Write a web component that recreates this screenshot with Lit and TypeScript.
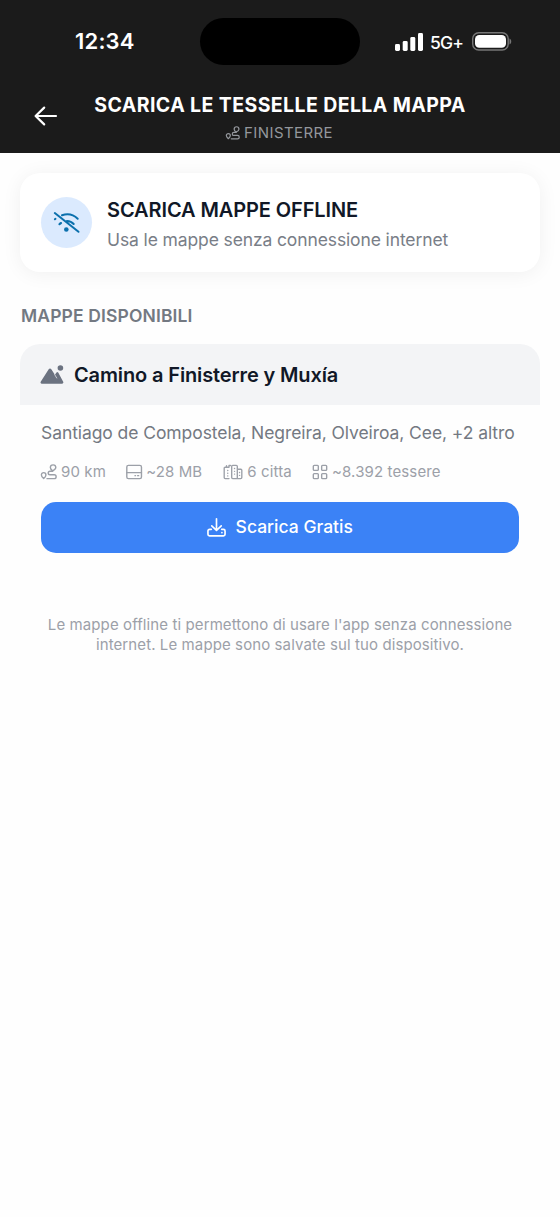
import { LitElement, html, css, svg } from "lit";
import { customElement, property } from "lit/decorators.js";

const glyphs: Record<string, unknown> = {
  back: svg`<path d="M3 12h20M11.200 3.600 2.600 12l8.600 8.400" stroke-width="2.200"/>`,
  route: svg`<path d="M4 21.800C2.200 20.200.6 18.500.6 16.400a3.400 3.400 0 0 1 6.800 0c0 2.100-1.600 3.800-3.400 5.400z"/><path d="M17.500 10.400c-2.200-1.500-3.500-3.200-3.500-5a4.100 4.100 0 0 1 8.200 0c0 2.200-2 3.700-4.700 5z"/><path d="M17.500 10.800h-4a2.700 2.700 0 0 0 0 5.400h6.300a2.900 2.900 0 0 1 0 5.800H9"/>`,
  drive: svg`<rect x="1.200" y="2" width="22" height="20" rx="2.500"/><path d="M1.200 13h22M13.500 17.500h.8M17.500 17.500h1.500"/>`,
  city: svg`<g stroke-width="1.350"><path d="M6 14.600H2.200a1 1 0 0 1-1-1V4.200a1 1 0 0 1 1-1H6M3.500 3V1.700M6 3V1.500h1.500M9.700 1.300h3.600a1 1 0 0 1 1 1v12.300H9.700a1 1 0 0 1-1-1V2.300a1 1 0 0 1 1-1zM14.500 5.200h3.300a1 1 0 0 1 1 1v7.400a1 1 0 0 1-1 1h-3.500"/><path d="M4.700 6.500h.1M4.700 9.200h.1M4.700 11.900h.1M11.500 4.500h.1M11.500 7.300h.1M11.500 10.100h.1M16.500 8.500h.1M16.500 11.400h.1"/></g>`,
  grid: svg`<rect x="2" y="2" width="7.500" height="7.500" rx="1.300"/><rect x="14.500" y="2" width="7.500" height="7.500" rx="1.300"/><rect x="2" y="14.500" width="7.500" height="7.500" rx="1.300"/><rect x="14.500" y="14.500" width="7.500" height="7.500" rx="1.300"/>`,
  download: svg`<path d="M12 1v14.500M6 10l6 5.700 6-5.700M5.500 14.300H3.200a2 2 0 0 0-2 2v4.200a2 2 0 0 0 2 2h17.600a2 2 0 0 0 2-2v-4.200a2 2 0 0 0-2-2h-2.300M18.800 18.500h.1"/>`,
  wifiOff: svg`<path d="M.8 2 24.500 20.800M8 4.300C13.500 2.400 19.500 3.700 23.700 7.800M.9 8.300l.6-.5M5.400 13.300c.6-.6 1.100-1 1.700-1.300M13 10.100c2.700.1 5 1 6.700 2.900"/><circle cx="12.300" cy="18.500" r="2.300" fill="currentColor" stroke="none"/>`,
  mountain: svg`<g fill="currentColor" stroke="none"><path d="M.7 18.800 8.700 6.200c.7-1.100 1.900-1.100 2.600 0l3.600 5.600 1.600-2.300c.5-.7 1.200-.7 1.700 0l5 9.300c.5 1-.1 1.900-1.200 1.900H1.800c-1.100 0-1.600-.9-1.100-1.900z"/><circle cx="20.400" cy="5" r="2.800"/></g><path d="m14.700 11.600 2 3.400" stroke="#f3f4f6" stroke-width=".7"/>`,
};

@customElement("line-icon")
class LineIcon extends LitElement {
  @property() name = "";
  @property() box = "0 0 24 24";
  static styles = css`
    :host { display: block; flex: none; }
    svg { display: block; width: 100%; height: 100%; fill: none; stroke: currentColor;
      stroke-width: var(--line, 2.1); stroke-linecap: round; stroke-linejoin: round; overflow: visible; }
  `;
  render() {
    return html`<svg viewBox=${this.box} aria-hidden="true">${glyphs[this.name]}</svg>`;
  }
}

@customElement("app-root")
class AppRoot extends LitElement {
  static styles = css`
    :host { display: block; min-height: 1217px; background: #fefefe; color: #111827;
      font-family: Inter, "Liberation Sans", sans-serif; }
    * { box-sizing: border-box; }
    h1, h2, h3, p { margin: 0; white-space: nowrap; }
    .top { height: 153px; background: #1b1b1b; color: #fff; }
    .status { height: 83px; padding: 18px 49px 0 75px; display: grid; grid-template-columns: 125px 160px 1fr; align-items: start; }
    .time { font-size: 22px; font-weight: 600; line-height: 47px; letter-spacing: .2px; }
    .island { height: 47px; border-radius: 24px; background: #000; }
    .signals { height: 47px; display: flex; align-items: center; justify-content: flex-end; }
    .bars { width: 28px; height: 18px; margin-right: 7.500px; }
    .net { font-size: 17.500px; font-weight: 500; letter-spacing: -.9px; margin-right: 8.500px; line-height: 47px; padding-top: 1px; }
    .battery { width: 40px; height: 19px; margin-right: -.5px; }
    .nav { height: 70px; padding-left: 33px; display: grid; grid-template-columns: 61px 372px 1fr; }
    .back { width: 24px; height: 24px; margin-top: 21px; }
    .heading { display: flex; flex-direction: column; align-items: center; padding-top: 10px; }
    h1 { font-size: 19.500px; font-weight: 700; line-height: 24px; letter-spacing: .4px; }
    .sub { display: flex; align-items: center; gap: 4px; margin: 6px 1px 0 0; font-size: 15px; line-height: 19px; letter-spacing: .4px; color: #94979c; }
    .sub line-icon { width: 14px; height: 14px; }
    main { padding: 20px 20px 0; }
    .banner { height: 99px; border-radius: 20px; background: #fff; padding: 3px 21px 0; display: flex; align-items: center; gap: 15px; box-shadow: 0 2px 20px rgba(0,0,0,.06); }
    .disc { width: 51px; height: 51px; margin-bottom: 3px; border-radius: 50%; background: #dbeafe; color: #0b70ad; display: grid; place-items: center; }
    .disc line-icon { width: 26px; height: 24px; --line: 2; }
    h2 { font-size: 20px; font-weight: 600; line-height: 26px; letter-spacing: -.1px; }
    .lead { margin-top: 5px; font-size: 17.500px; line-height: 24px; letter-spacing: -.12px; color: #797e87; }
    h3 { margin: 33px 0 0 1px; font-size: 17.500px; line-height: 22px; font-weight: 600; letter-spacing: .13px; color: #737982; }
    .card { margin-top: 17px; border-radius: 20px; overflow: hidden; background: #fefefe; }
    .card-top { height: 61px; padding-left: 20px; display: flex; align-items: center; gap: 10px; background: #f3f4f6; }
    .card-top line-icon { width: 24px; height: 24px; color: #6b7280; }
    .trail { letter-spacing: -.13px; }
    .body { padding: 16px 21px 0; }
    .cities { font-size: 17.500px; line-height: 24px; letter-spacing: -.08px; color: #747982; }
    .stats { display: flex; gap: 20.200px; margin-top: 17px; height: 20px; color: #9ca0a8; }
    .stat { display: flex; align-items: center; gap: 4px; font-size: 15px; line-height: 20px; letter-spacing: .12px; white-space: nowrap; }
    .stat line-icon { width: 16px; height: 16px; }
    .stat .wide { width: 20px; margin-right: .8px; }
    .cta { margin-top: 19.500px; width: 478px; height: 51px; border: 0; border-radius: 15px; background: #3b82f6; color: #fff; display: flex; align-items: center; justify-content: center; gap: 9.500px; font: 500 17.500px/24px Inter, sans-serif; padding: 0; }
    .cta line-icon { width: 19px; height: 19px; }
    .note { margin-top: 62px; text-align: center; font-size: 15px; line-height: 20.500px; letter-spacing: .1px; color: #9ca0a8; }
  `;
  render() {
    return html`
      <header class="top">
        <div class="status">
          <div class="time">12:34</div>
          <div class="island"></div>
          <div class="signals">
            <svg class="bars" viewBox="0 0 28 18" fill="#fff"><rect y="11" width="5" height="7" rx="1.400"/><rect x="7.700" y="8" width="5" height="10" rx="1.400"/><rect x="15.300" y="4" width="5" height="14" rx="1.400"/><rect x="23" width="5" height="18" rx="1.400"/></svg>
            <span class="net">5G+</span>
            <svg class="battery" viewBox="0 0 40 19"><rect x=".7" y=".7" width="35.500" height="17.300" rx="6" fill="none" stroke="#777" stroke-width="1.400"/><rect x="3" y="3" width="31" height="12.700" rx="4.300" fill="#fff"/><path d="M37.500 6.500c2.300.8 2.300 5.200 0 6z" fill="#777"/></svg>
          </div>
        </div>
        <div class="nav">
          <line-icon class="back" name="back"></line-icon>
          <div class="heading">
            <h1>SCARICA LE TESSELLE DELLA MAPPA</h1>
            <div class="sub"><line-icon name="route"></line-icon><span>FINISTERRE</span></div>
          </div>
        </div>
      </header>
      <main>
        <section class="banner">
          <div class="disc"><line-icon name="wifiOff" box="0 0 26 24"></line-icon></div>
          <div><h2 class="offline">SCARICA MAPPE OFFLINE</h2><p class="lead">Usa le mappe senza connessione internet</p></div>
        </section>
        <h3>MAPPE DISPONIBILI</h3>
        <section class="card">
          <div class="card-top"><line-icon name="mountain"></line-icon><h2 class="trail">Camino a Finisterre y Muxía</h2></div>
          <div class="body">
            <p class="cities">Santiago de Compostela, Negreira, Olveiroa, Cee, +2 altro</p>
            <div class="stats">
              <div class="stat"><line-icon name="route"></line-icon><span>90 km</span></div>
              <div class="stat"><line-icon name="drive"></line-icon><span>~28 MB</span></div>
              <div class="stat"><line-icon class="wide" name="city" box="0 0 20 16"></line-icon><span>6 citta</span></div>
              <div class="stat"><line-icon name="grid"></line-icon><span>~8.392 tessere</span></div>
            </div>
            <button class="cta"><line-icon name="download"></line-icon><span>Scarica Gratis</span></button>
          </div>
        </section>
        <p class="note">Le mappe offline ti permettono di usare l'app senza connessione<br>internet. Le mappe sono salvate sul tuo dispositivo.</p>
      </main>`;
  }
}
